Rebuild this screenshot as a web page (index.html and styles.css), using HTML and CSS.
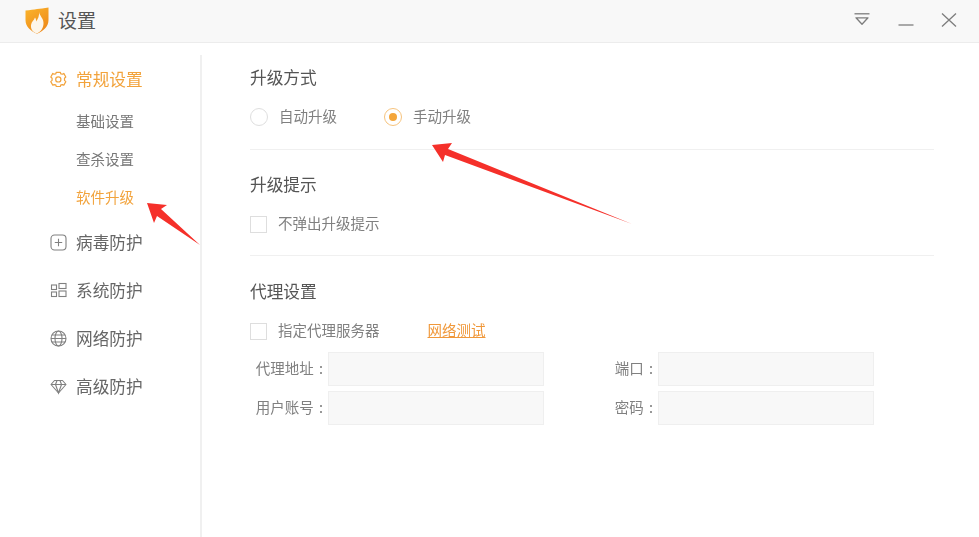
FILE: index.html
```html
<!DOCTYPE html>
<html lang="zh-CN">
<head>
<meta charset="utf-8">
<title>设置</title>
<link rel="stylesheet" href="styles.css">
</head>
<body>
<div class="window">
  <header class="titlebar">
    <div class="brand">
      <svg class="logo" width="24" height="27" viewBox="0 0 24 27">
        <defs>
          <linearGradient id="sh" x1="0" y1="0" x2="0.6" y2="1">
            <stop offset="0" stop-color="#fbb52c"/>
            <stop offset="1" stop-color="#ee8a1a"/>
          </linearGradient>
        </defs>
        <path d="M0.500 3.500 C5 3 9 2.500 12 2 C15 2 19 1 23.500 0.500 L23.500 13 C23.500 20 18 24 12 26.800 C6 24 0.500 20 0.500 13 Z" fill="url(#sh)"/>
        <path d="M14 5 C14.500 9 19 11.500 18.500 17 C18 22.500 14.500 25.500 12 26.500 C8 25.500 5.500 22 6 18 C6.500 14.500 9 13.500 10 10.500 C11 12 11.200 13 11 14.500 C13 12 14.500 8.500 14 5 Z" fill="#fdf6ea"/>
      </svg>
      <span class="app-title">设置</span>
    </div>
    <div class="win-controls">
      <svg width="16" height="16" viewBox="0 0 16 16" fill="none" stroke="#7d7d7d" stroke-width="1.300">
        <path d="M0.500 0.800 H15.500"/>
        <path d="M2 4.800 H14 L8 11.300 Z" stroke-linejoin="round"/>
      </svg>
      <svg width="16" height="16" viewBox="0 0 16 16" fill="none" stroke="#7d7d7d" stroke-width="1.300">
        <path d="M0.500 12 H15.500"/>
      </svg>
      <svg width="16" height="16" viewBox="0 0 16 16" fill="none" stroke="#7d7d7d" stroke-width="1.300">
        <path d="M1 0.500 L15 13.500 M15 0.500 L1 13.500"/>
      </svg>
    </div>
  </header>
  <div class="body">
    <nav class="sidebar">
      <div class="nav-item active">
        <svg class="nav-icon" width="17" height="17" viewBox="0 0 17 17" fill="none" stroke="#f2a33c" stroke-width="1.200" stroke-linejoin="round">
          <path d="M6.300 1.300 H10.300 L10.900 3 L12.600 3.200 L13.800 2.400 L15.800 6 L14.500 7.200 V9.400 L15.800 10.600 L13.800 14.200 L12.600 13.600 L10.900 13.800 L10.300 15.500 H6.300 L5.700 13.800 L4 13.600 L2.800 14.200 L0.800 10.600 L2.100 9.400 V7.200 L0.800 6 L2.800 2.400 L4 3.200 L5.700 3 Z"/>
          <circle cx="8.300" cy="8.400" r="2.600"/>
        </svg>
        <span class="nav-text">常规设置</span>
      </div>
      <ul class="sub-list">
        <li class="sub-item">基础设置</li>
        <li class="sub-item">查杀设置</li>
        <li class="sub-item current">软件升级</li>
      </ul>
      <div class="nav-group">
        <div class="nav-item">
          <svg class="nav-icon" width="17" height="17" viewBox="0 0 17 17" fill="none" stroke="#808080" stroke-width="1.100">
            <rect x="1" y="1" width="15" height="15" rx="3.500"/>
            <path d="M8.500 4.800 V12.200 M4.800 8.500 H12.200"/>
          </svg>
          <span class="nav-text">病毒防护</span>
        </div>
        <div class="nav-item">
          <svg class="nav-icon" width="17" height="17" viewBox="0 0 17 17" fill="none" stroke="#808080" stroke-width="1.100">
            <rect x="1.500" y="3" width="5" height="4.500"/>
            <rect x="1.500" y="10" width="5" height="4.500"/>
            <rect x="9" y="1.500" width="7" height="5"/>
            <rect x="9" y="9" width="7" height="5.500"/>
          </svg>
          <span class="nav-text">系统防护</span>
        </div>
        <div class="nav-item">
          <svg class="nav-icon" width="17" height="17" viewBox="0 0 17 17" fill="none" stroke="#808080" stroke-width="1.100">
            <circle cx="8.500" cy="8.500" r="7.500"/>
            <ellipse cx="8.500" cy="8.500" rx="3.500" ry="7.500"/>
            <path d="M1 8.500 H16 M2 5 H15 M2 12 H15"/>
          </svg>
          <span class="nav-text">网络防护</span>
        </div>
        <div class="nav-item">
          <svg class="nav-icon" width="17" height="17" viewBox="0 0 17 17" fill="none" stroke="#808080" stroke-width="1.100">
            <path d="M4.500 2.500 H12.500 L16 6.500 L8.500 15 L1 6.500 Z" stroke-linejoin="round"/>
            <path d="M1 6.500 H16 M5.500 6.500 L8.500 15 L11.500 6.500 M5.500 6.500 L7 2.500 M11.500 6.500 L10 2.500"/>
          </svg>
          <span class="nav-text">高级防护</span>
        </div>
      </div>
    </nav>
    <main class="content">
      <section class="section section-method">
        <h2 class="section-title">升级方式</h2>
        <div class="option-row">
          <label class="option"><span class="radio"></span><span class="option-text">自动升级</span></label>
          <label class="option"><span class="radio checked"></span><span class="option-text">手动升级</span></label>
        </div>
      </section>
      <section class="section section-tips">
        <h2 class="section-title">升级提示</h2>
        <div class="option-row">
          <label class="option"><span class="checkbox"></span><span class="option-text">不弹出升级提示</span></label>
        </div>
      </section>
      <section class="section section-proxy">
        <h2 class="section-title">代理设置</h2>
        <div class="option-row">
          <label class="option"><span class="checkbox"></span><span class="option-text">指定代理服务器</span></label>
          <a class="link">网络测试</a>
        </div>
        <div class="proxy-form">
          <span class="field-label">代理地址 :</span><div class="input"></div>
          <span class="field-label">端口 :</span><div class="input"></div>
          <span class="field-label">用户账号 :</span><div class="input"></div>
          <span class="field-label">密码 :</span><div class="input"></div>
        </div>
      </section>
    </main>
  </div>
  <svg class="annotations" width="979" height="537" viewBox="0 0 979 537">
    <path d="M147 203 L167 205 L161 209 L200 245 L157 216 L154 223 Z" fill="#f5302a"/>
    <path d="M432 145 L452 143 L448 149 L632 224 L445 155 L443 162 Z" fill="#f5302a"/>
  </svg>
</div>
</body>
</html>
```

FILE: styles.css
```css
* { box-sizing: border-box; }
html, body { margin: 0; height: 100%; }
body {
  background: #fff;
  font-family: "Noto Sans CJK SC", "Liberation Sans", sans-serif;
  color: #666;
  overflow: hidden;
}
.window { position: relative; height: 537px; display: flex; flex-direction: column; filter: blur(0.35px); }

.titlebar {
  height: 43px;
  flex: none;
  display: flex;
  justify-content: space-between;
  align-items: center;
  background: #f8f8f8;
  border-bottom: 1px solid #ececec;
  padding: 0 22px 0 25px;
}
.brand { display: flex; align-items: center; gap: 9px; }
.logo { display: block; margin-bottom: 1px; }
.app-title { font-size: 19px; color: #555; line-height: 22px; padding-bottom: 2px; }
.win-controls { display: flex; align-items: center; gap: 27.500px; }
.win-controls svg { display: block; }

.body { flex: 1; display: flex; min-height: 0; }

.sidebar {
  width: 202px;
  flex: none;
  margin-top: 12px;
  border-right: 2px solid #f0f0f0;
  padding: 13px 0 0 50px;
}
.nav-item {
  display: flex;
  align-items: center;
  gap: 9px;
  height: 24px;
  font-size: 16.700px;
  color: #666;
}
.nav-text { line-height: 22px; padding-bottom: 2px; }
.nav-item.active { color: #f2a33c; }
.nav-icon { flex: none; margin-bottom: 1px; }
.sub-list { list-style: none; margin: 17px 0 0; padding: 0 0 0 26px; display: flex; flex-direction: column; gap: 14px; }
.sub-item { height: 24px; line-height: 24px; font-size: 14.500px; color: #777; }
.sub-item.current { color: #f2a33c; }
.nav-group { margin-top: 22px; display: flex; flex-direction: column; gap: 24px; }

.content { flex: 1; padding: 23px 45px 0 48px; min-width: 0; }
.section-method { border-bottom: 1px solid #f0f0f0; padding-bottom: 20px; margin-bottom: 23px; }
.section-tips { border-bottom: 1px solid #f0f0f0; padding-bottom: 19px; margin-bottom: 24px; }
.section-title { margin: 0; font-size: 16.700px; line-height: 22px; padding-bottom: 2px; font-weight: 400; color: #555; }
.option-row { display: flex; align-items: center; height: 24px; margin-top: 15px; gap: 47px; font-size: 14.500px; color: #808080; }
.option { display: flex; align-items: center; gap: 11px; }
.option-text { line-height: 22px; padding-bottom: 2px; }
.radio { width: 18px; height: 18px; border-radius: 50%; border: 1px solid #dedede; background: #fff; display: flex; align-items: center; justify-content: center; }
.radio.checked { border-color: #f5c27c; }
.radio.checked::after { content: ""; width: 8px; height: 8px; border-radius: 50%; background: #f4a63a; }
.checkbox { width: 17px; height: 17px; border: 1px solid #dedede; background: #fff; }
.link { color: #f0983a; text-decoration: underline; margin-left: 1px; line-height: 22px; padding-bottom: 2px; }

.proxy-form {
  display: grid;
  grid-template-columns: 78px 216px 114px 216px;
  grid-auto-rows: 34px;
  row-gap: 5px;
  margin-top: 9px;
  font-size: 14.500px;
}
.field-label { text-align: right; line-height: 32px; color: #808080; padding-right: 5px; word-spacing: 2px; white-space: nowrap; }
.input { background: #f8f8f8; border: 1px solid #efefef; }

.annotations { position: absolute; left: 0; top: 0; pointer-events: none; }
```
